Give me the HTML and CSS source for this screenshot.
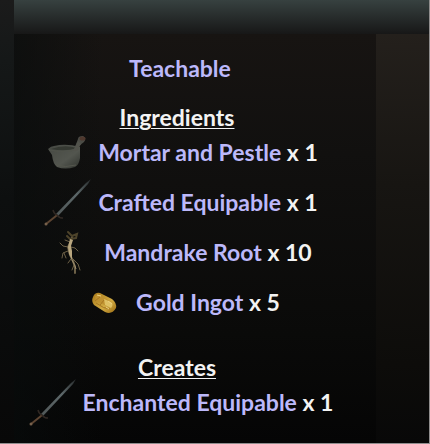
FILE: index.html
```
<!DOCTYPE html>
<html lang="en">
<head>
	<meta charset="UTF-8">
	<meta name="viewport" content="width=device-width, initial-scale=1">
	<title>Recipe</title>
	<link rel="stylesheet" href="styles.css">
</head>
<body>
	<svg class="defs" aria-hidden="true">
		<defs>
			<linearGradient id="blade" x1="0" y1="1" x2="1" y2="0">
				<stop offset="0" stop-color="#505757"/>
				<stop offset="0.6" stop-color="#5c6769"/>
				<stop offset="1" stop-color="#262a2b"/>
			</linearGradient>
			<linearGradient id="bowl" x1="0" y1="0" x2="1" y2="1">
				<stop offset="0" stop-color="#454842"/>
				<stop offset="0.6" stop-color="#53564f"/>
				<stop offset="1" stop-color="#30332e"/>
			</linearGradient>
			<linearGradient id="gold" x1="0" y1="0" x2="1" y2="1">
				<stop offset="0" stop-color="#a87818"/>
				<stop offset="0.6" stop-color="#d1ab43"/>
				<stop offset="1" stop-color="#9b6b12"/>
			</linearGradient>
			<symbol id="sword" viewBox="0 0 50 50">
				<path d="M14 37 L44 6 L49 2 L46 7 L16 39 Z" fill="url(#blade)"/>
				<path d="M11 33 Q12 37 15 38 Q17 41 21 41" stroke="#302823" stroke-width="1.5" fill="none"/>
				<path d="M14 39 L4 47" stroke="#5c4431" stroke-width="2" stroke-linecap="round"/>
				<circle cx="4" cy="47" r="1.5" fill="#76604b"/>
			</symbol>
		</defs>
	</svg>
	<div class="page">
		<div class="header"></div>
		<div class="content">
			<div class="recipe">
				<p class="skill"><a href="#teachable">Teachable</a></p>

				<h2>Ingredients</h2>
				<ul>
					<li>
						<svg class="icon" viewBox="0 0 50 50" aria-hidden="true">
							<path d="M31 25 L36 12 Q36 9 41 9 Q45 11 42 15 L37 19 L35 27 Z" fill="#4b4c46"/>
							<ellipse cx="40.500" cy="11.500" rx="3" ry="2" fill="#4f382e"/>
							<path d="M6 22 Q9 19 12 19 Q24 16 38 20 L38 31 Q37 38 33 40 Q23 43 15 40 Q11 37 10 28 Z" fill="url(#bowl)"/>
							<path d="M9 22 Q22 17 35 21 Q24 25 9 22" fill="#353932"/>
							<path d="M7 23 Q22 26 37 22" stroke="#50534b" fill="none"/>
							<path d="M14 38 Q23 41 34 38" stroke="#55574e" fill="none"/>
							<path d="M31 24 L36 14 L39 17 L35 24 Z" fill="#52534c"/>
						</svg>
						<span><a href="#mortar">Mortar and Pestle</a> x 1</span>
					</li>
					<li>
						<svg class="icon" aria-hidden="true"><use href="#sword"/></svg>
						<span><a href="#crafted">Crafted Equipable</a> x 1</span>
					</li>
					<li>
						<svg class="icon" viewBox="0 0 50 50" aria-hidden="true">
							<g fill="none" stroke="#6c6047" stroke-linecap="round">
								<path d="M24 10 L23 14 L20 20 L22 28 L25 34 L27 40 L27 46" stroke-width="2"/>
								<path d="M20 5 L24 9 L29 7 L28 11 L22 12 L19 9" stroke="#4d432a" stroke-width="2"/>
								<path d="M20 20 L15 19 L12 16 M23 20 L27 21 L30 24 M20 24 L15 26 L14 31 M24 31 L30 37 L32 43 M23 32 L20 36 M26 38 L24 43 M16 26 L18 31 M22 15 L17 13" stroke-width="1"/>
							</g>
							<path d="M22 12 L20 20 L21 27 L24 33 L24 24 L23 19 L25 13 Z" fill="#b8a67e"/>
							<path d="M24 33 L27 39 L28 42" stroke="#a19170" fill="none"/>
						</svg>
						<span><a href="#mandrake">Mandrake Root</a> x 10</span>
					</li>
					<li>
						<svg class="icon" viewBox="0 0 50 50" aria-hidden="true">
							<path d="M13 20 Q15 15 20 16 L32 22 Q37 26 36 31 Q32 38 25 35 L14 28 Q11 24 13 20 Z" fill="url(#gold)"/>
							<path d="M15 19 Q18 17 21 19 L32 25 L29 30 L16 24 Z" fill="#bf9130"/>
							<path d="M24 22 L31 25 Q34 27 31 31 L25 28 Z" fill="#dfc164"/>
							<path d="M15 24 L20 20 M20 28 L24 23 M16 26 Q24 32 30 32" stroke="#a87722" fill="none"/>
							<path d="M17 18 L21 19 M26 30 L29 32 M28 24 L32 27" stroke="#eed180" fill="none"/>
						</svg>
						<span><a href="#gold-ingot">Gold Ingot</a> x 5</span>
					</li>
				</ul>

				<h2>Creates</h2>
				<ul>
					<li>
						<svg class="icon" aria-hidden="true"><use href="#sword"/></svg>
						<span><a href="#enchanted">Enchanted Equipable</a> x 1</span>
					</li>
				</ul>
			</div>
		</div>
	</div>
</body>
</html>
```
FILE: styles.css
```
* {
	box-sizing: border-box;
}

body {
	margin: 0;
	background: linear-gradient(#1b1b1b, #151818 60px, #0d0f0f 200px, #080808);
	color: #f3f3f3;
	font-family: "Trebuchet MS", Lato, sans-serif;
	font-size: 23px;
	font-weight: bold;
	line-height: 20px;
}

h2, p, ul {
	margin: 0;
	padding: 0;
}

.defs {
	position: absolute;
	width: 0;
	height: 0;
}

.page {
	display: flex;
	flex-direction: column;
	min-height: 100vh;
	padding-left: 14px;
	border-right: 1px solid #8f8d8d;
	border-bottom: 1px solid #8f8d8d;
}

.header {
	height: 34px;
	background: linear-gradient(#374140, #171717);
}

.content {
	display: flex;
	flex: 1;
	padding-right: 53px;
	background: linear-gradient(#24201c, #171512 150px, #0d0c0a 330px, #080808);
}

.recipe {
	flex: 1;
	padding: 24px 30px 16px 0;
	background: linear-gradient(90deg, rgba(8, 12, 12, 0.6), rgba(8, 12, 12, 0) 90px), linear-gradient(#171412, #11100f 120px, #0a0a09 300px, #050505);
	text-align: center;
}

.skill {
	margin-bottom: 29px;
}

h2 {
	padding-right: 6px;
	font-size: 23px;
	text-decoration: underline;
	text-decoration-thickness: 1px;
	text-underline-offset: 2px;
}

ul {
	margin-bottom: 30px;
	list-style: none;
}

ul:last-child {
	margin-bottom: 0;
}

li {
	display: flex;
	align-items: center;
	justify-content: center;
	gap: 6px;
}

a {
	color: #bcb8fa;
	text-decoration: none;
}

.icon {
	flex: none;
	width: 50px;
	height: 50px;
}
```
